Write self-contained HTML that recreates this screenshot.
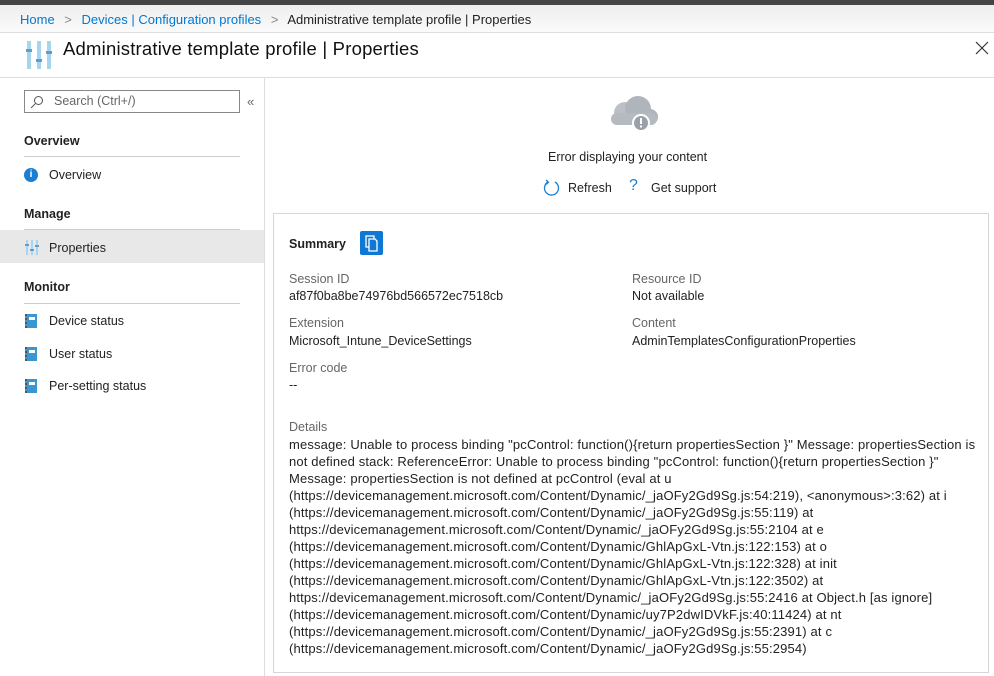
<!DOCTYPE html>
<html><head><style>
*{margin:0;padding:0;box-sizing:border-box}
body{width:994px;height:676px;overflow:hidden;background:#fff;font-family:"Liberation Sans",sans-serif;color:#222;font-size:12px;position:relative}
.a{position:absolute;white-space:nowrap}
.lbl{color:#666;font-size:12.5px}
.val{font-size:12.5px;color:#222}
</style></head><body>
<div class="a" style="left:0;top:0;width:994px;height:5px;background:#444"></div>
<div class="a" style="left:0;top:5px;width:994px;height:27px;background:linear-gradient(#eee,#fafafa)"></div>
<div class="a" style="left:0;top:32px;width:994px;height:1px;background:#ddd"></div>
<div class="a" style="left:20px;top:12px;font-size:13px;color:#0078d4">Home <span style="color:#888;margin:0 6px">&gt;</span> Devices | Configuration profiles <span style="color:#888;margin:0 6px">&gt;</span> <span style="color:#222">Administrative template profile | Properties</span></div>
<svg class="a" style="left:26px;top:41px" width="26" height="28"><g fill="#a8d4ee"><rect x="1" y="0" width="4" height="28"/><rect x="11" y="0" width="4" height="28"/><rect x="21" y="0" width="4" height="28"/></g><g fill="#5a9fd0"><rect x="0" y="8" width="6" height="3"/><rect x="10" y="18" width="6" height="3"/><rect x="20" y="10" width="6" height="3"/></g></svg>
<div class="a" style="left:63px;top:38px;font-size:18.5px;color:#111;letter-spacing:0.2px">Administrative template profile | Properties</div>
<svg class="a" style="left:975px;top:41px" width="14" height="14"><path d="M1 1 L13 13 M13 1 L1 13" stroke="#333" stroke-width="1.2"/></svg>
<div class="a" style="left:0;top:77px;width:994px;height:1px;background:#ddd"></div>
<div class="a" style="left:264px;top:78px;width:1px;height:598px;background:#ddd"></div>
<div class="a" style="left:24px;top:90px;width:216px;height:23px;border:1px solid #888"></div>
<svg class="a" style="left:30px;top:95px" width="14" height="14"><circle cx="8.5" cy="5.5" r="4" fill="none" stroke="#555"/><line x1="5.5" y1="8.5" x2="1" y2="13" stroke="#555"/></svg>
<div class="a" style="left:54px;top:94px;color:#666;font-size:12.5px">Search (Ctrl+/)</div>
<div class="a" style="left:247px;top:94px;color:#666;font-size:13px">«</div>
<div class="a" style="left:24px;top:134px;font-weight:bold;font-size:12.5px">Overview</div>
<div class="a" style="left:24px;top:156px;width:216px;height:1px;background:#ccc"></div>
<div class="a" style="left:24px;top:168px;width:14px;height:14px;border-radius:50%;background:#1a7fd4;color:#fff;font-size:10px;font-weight:bold;text-align:center;line-height:14px">i</div>
<div class="a" style="left:49px;top:168px;font-size:12.5px">Overview</div>
<div class="a" style="left:24px;top:207px;font-weight:bold;font-size:12.5px">Manage</div>
<div class="a" style="left:24px;top:229px;width:216px;height:1px;background:#ccc"></div>
<div class="a" style="left:0;top:230px;width:264px;height:33px;background:#e8e8e8"></div>
<svg class="a" style="left:25px;top:240px" width="14" height="15"><g fill="#a8d4ee"><rect x="1" y="0" width="2" height="15"/><rect x="6" y="0" width="2" height="15"/><rect x="11" y="0" width="2" height="15"/></g><g fill="#5a9fd0"><rect x="0" y="4" width="4" height="2"/><rect x="5" y="9" width="4" height="2"/><rect x="10" y="5" width="4" height="2"/></g></svg>
<div class="a" style="left:49px;top:241px;font-size:12.5px">Properties</div>
<div class="a" style="left:24px;top:280px;font-weight:bold;font-size:12.5px">Monitor</div>
<div class="a" style="left:24px;top:303px;width:216px;height:1px;background:#ccc"></div>
<div class="a" style="left:25px;top:314px;width:12px;height:14px;background:#3a96d0;border-left:2px dotted #555"><div style="margin:3px 2px;height:3px;background:#fff"></div></div>
<div class="a" style="left:49px;top:314px;font-size:12.5px">Device status</div>
<div class="a" style="left:25px;top:347px;width:12px;height:14px;background:#3a96d0;border-left:2px dotted #555"><div style="margin:3px 2px;height:3px;background:#fff"></div></div>
<div class="a" style="left:49px;top:347px;font-size:12.5px">User status</div>
<div class="a" style="left:25px;top:379px;width:12px;height:14px;background:#3a96d0;border-left:2px dotted #555"><div style="margin:3px 2px;height:3px;background:#fff"></div></div>
<div class="a" style="left:49px;top:379px;font-size:12.5px">Per-setting status</div>
<svg class="a" style="left:605px;top:93px" width="54" height="40"><circle cx="20" cy="20" r="11" fill="#bcc0c6"/><circle cx="33" cy="16" r="13" fill="#b0b5bc"/><circle cx="45" cy="24" r="8" fill="#b0b5bc"/><rect x="6" y="20" width="46" height="12" rx="6" fill="#b5bac1"/><circle cx="36" cy="30" r="8" fill="#9aa0a8" stroke="#fff" stroke-width="2"/><rect x="35" y="25" width="2" height="6" fill="#fff"/><rect x="35" y="32.5" width="2" height="2" fill="#fff"/></svg>
<div class="a" style="left:548px;top:150px;font-size:12.5px">Error displaying your content</div>
<svg class="a" style="left:543px;top:179px" width="17" height="17"><path d="M5 3 A7 7 0 1 0 12 3" fill="none" stroke="#1a7fd4" stroke-width="1.3"/><path d="M3 1 L5.5 3.2 L3 5.5" fill="none" stroke="#1a7fd4" stroke-width="1.3"/></svg>
<div class="a" style="left:568px;top:181px;font-size:12.5px">Refresh</div>
<div class="a" style="left:629px;top:177px;font-size:16px;color:#1a7fd4">?</div>
<div class="a" style="left:651px;top:181px;font-size:12.5px">Get support</div>
<div class="a" style="left:273px;top:213px;width:716px;height:460px;border:1px solid #d6d6d6"></div>
<div class="a" style="left:289px;top:237px;font-weight:bold;font-size:12.5px">Summary</div>
<div class="a" style="left:360px;top:231px;width:23px;height:24px;background:#0f78d4;border-radius:2px"><svg width="23" height="24"><rect x="6" y="5" width="8" height="11" fill="none" stroke="#fff" stroke-width="1.3"/><path d="M9 8 h6 l2 2 v10 h-8z" fill="#0f78d4" stroke="#fff" stroke-width="1.3"/></svg></div>
<div class="a lbl" style="left:289px;top:272px">Session ID</div>
<div class="a val" style="left:289px;top:289px">af87f0ba8be74976bd566572ec7518cb</div>
<div class="a lbl" style="left:632px;top:272px">Resource ID</div>
<div class="a val" style="left:632px;top:289px">Not available</div>
<div class="a lbl" style="left:289px;top:316px">Extension</div>
<div class="a val" style="left:289px;top:334px">Microsoft_Intune_DeviceSettings</div>
<div class="a lbl" style="left:632px;top:316px">Content</div>
<div class="a val" style="left:632px;top:334px">AdminTemplatesConfigurationProperties</div>
<div class="a lbl" style="left:289px;top:361px">Error code</div>
<div class="a val" style="left:289px;top:378px">--</div>
<div class="a lbl" style="left:289px;top:420px">Details</div>
<div class="a val" style="left:289px;top:436px;line-height:17px;font-size:13px;letter-spacing:0.15px">message: Unable to process binding "pcControl: function(){return propertiesSection }" Message: propertiesSection is<br>not defined stack: ReferenceError: Unable to process binding "pcControl: function(){return propertiesSection }"<br>Message: propertiesSection is not defined at pcControl (eval at u<br>(https://devicemanagement.microsoft.com/Content/Dynamic/_jaOFy2Gd9Sg.js:54:219), &lt;anonymous&gt;:3:62) at i<br>(https://devicemanagement.microsoft.com/Content/Dynamic/_jaOFy2Gd9Sg.js:55:119) at<br>https://devicemanagement.microsoft.com/Content/Dynamic/_jaOFy2Gd9Sg.js:55:2104 at e<br>(https://devicemanagement.microsoft.com/Content/Dynamic/GhlApGxL-Vtn.js:122:153) at o<br>(https://devicemanagement.microsoft.com/Content/Dynamic/GhlApGxL-Vtn.js:122:328) at init<br>(https://devicemanagement.microsoft.com/Content/Dynamic/GhlApGxL-Vtn.js:122:3502) at<br>https://devicemanagement.microsoft.com/Content/Dynamic/_jaOFy2Gd9Sg.js:55:2416 at Object.h [as ignore]<br>(https://devicemanagement.microsoft.com/Content/Dynamic/uy7P2dwIDVkF.js:40:11424) at nt<br>(https://devicemanagement.microsoft.com/Content/Dynamic/_jaOFy2Gd9Sg.js:55:2391) at c<br>(https://devicemanagement.microsoft.com/Content/Dynamic/_jaOFy2Gd9Sg.js:55:2954)</div>
</body></html>
